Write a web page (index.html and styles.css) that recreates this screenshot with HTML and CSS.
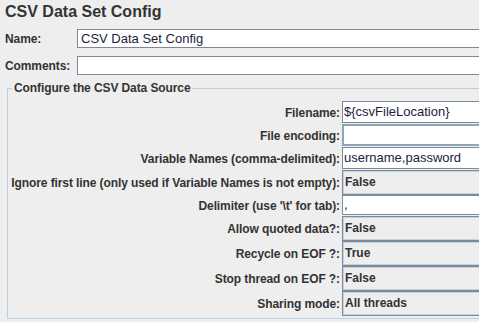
FILE: index.html
```html
<!DOCTYPE html>
<html>
<head>
  <link rel="stylesheet" href="styles.css">
</head>
<body>
<div class="panel">
  <!-- Panel title -->
  <h1 class="title">CSV Data Set Config</h1>

  <!-- Name / comments -->
  <div class="top-row">
    <label class="top-label">Name:</label>
    <div class="text-field">CSV Data Set Config</div>
  </div>
  <div class="top-row">
    <label class="top-label">Comments:</label>
    <div class="text-field"></div>
  </div>

  <!-- Data source settings -->
  <fieldset class="source">
    <legend>Configure the CSV Data Source</legend>
    <div class="form-grid">
      <label class="form-label">Filename:</label>
      <div class="text-field">${csvFileLocation}</div>

      <label class="form-label">File encoding:</label>
      <div class="text-field focused"></div>

      <label class="form-label">Variable Names (comma-delimited):</label>
      <div class="text-field">username,password</div>

      <label class="form-label">Ignore first line (only used if Variable Names is not empty):</label>
      <div class="combo">False</div>

      <label class="form-label">Delimiter (use '\t' for tab):</label>
      <div class="text-field short">,</div>

      <label class="form-label">Allow quoted data?:</label>
      <div class="combo">False</div>

      <label class="form-label">Recycle on EOF ?:</label>
      <div class="combo">True</div>

      <label class="form-label">Stop thread on EOF ?:</label>
      <div class="combo">False</div>

      <label class="form-label">Sharing mode:</label>
      <div class="combo">All threads</div>
    </div>
  </fieldset>
</div>
</body>
</html>
```

FILE: styles.css
```css
/* Reset */
* {
  margin: 0;
  padding: 0;
  box-sizing: border-box;
}

body {
  background-color: #eeeeee;
  font-family: "Liberation Sans", Arial, sans-serif;
  font-size: 12px;
  color: #333333;
  overflow: hidden;
}

/* Whole panel is wider than the window, fields run off the right edge */
.panel {
  width: 540px;
  padding: 0 0 0 5px;
}

.title {
  font-size: 16px;
  font-weight: bold;
  line-height: 20px;
  padding-top: 2px;
  height: 25px;
}

.top-row {
  display: flex;
  align-items: center;
  height: 27px;
}

.top-label {
  width: 72px;
  font-weight: bold;
  letter-spacing: -0.1px;
}

.text-field {
  flex: 1;
  height: 22px;
  line-height: 20px;
  background-color: #ffffff;
  border: 1px solid #7a8a99;
  padding-left: 1px;
  font-size: 13px;
  color: #1c1c3c;
  white-space: nowrap;
}

.top-row .text-field {
  height: 19px;
  line-height: 17px;
  padding-left: 3px;
}

/* Titled border */
.source {
  margin: 2px 0 0 2px;
  border: 1px solid #b8cfe5;
  padding: 6px 0 2px 2px;
}

.source legend {
  font-weight: bold;
  font-size: 12px;
  letter-spacing: -0.1px;
  padding: 0 2px;
  margin-left: 2px;
  line-height: 14px;
}

.form-grid {
  display: grid;
  grid-template-columns: 330px 1fr;
  column-gap: 2px;
  align-items: center;
}

.form-label {
  text-align: right;
  font-weight: bold;
  white-space: nowrap;
  letter-spacing: -0.1px;
}

.form-grid .text-field {
  margin: 0 0 1px 0;
}

.form-grid .text-field.short {
  height: 20px;
  line-height: 18px;
}

.text-field.focused {
  border: 2px solid #8fa5ba;
}

.combo {
  height: 25px;
  line-height: 23px;
  background-color: #eeeeee;
  border: 1px solid #7a8a99;
  box-shadow: inset 0 0 0 1px #c6d2dc;
  padding-left: 2px;
  font-weight: bold;
  font-size: 12px;
}
```
